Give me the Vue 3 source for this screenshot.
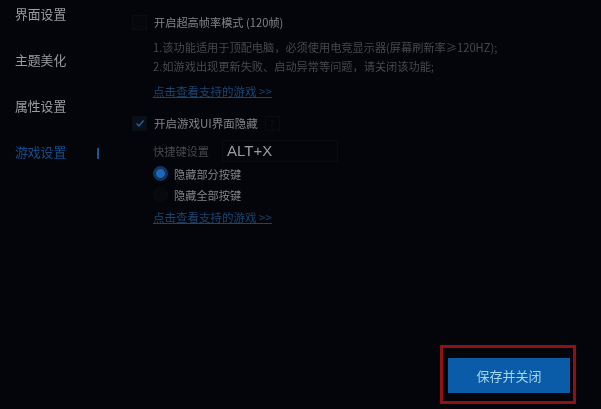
<script setup>
const navItems = [
  { label: '界面设置', active: false },
  { label: '主题美化', active: false },
  { label: '属性设置', active: false },
  { label: '游戏设置', active: true },
]
</script>

<template>
  <div class="page">
    <aside class="side">
      <div v-for="item in navItems" :key="item.label" class="nav" :class="{ on: item.active }">
        <span>{{ item.label }}</span>
        <i v-if="item.active" class="mark"></i>
      </div>
    </aside>
    <main class="main">
      <div class="check-row first">
        <span class="box"></span>
        <span>开启超高帧率模式 (120帧)</span>
      </div>
      <p class="note n1">1.该功能适用于顶配电脑，必须使用电竞显示器(屏幕刷新率≥120HZ);</p>
      <p class="note n2">2.如游戏出现更新失败、启动异常等问题，请关闭该功能;</p>
      <a class="link l1">点击查看支持的游戏 &gt;&gt;</a>
      <div class="check-row second">
        <span class="box on">
          <svg width="10" height="9" viewBox="0 0 10 9"><path d="M1.5 4.5 L4 7 L8.5 1.5" fill="none" stroke="#2a5f9a" stroke-width="1.4"/></svg>
        </span>
        <span>开启游戏UI界面隐藏</span>
        <span class="help">?</span>
      </div>
      <div class="indent">
        <div class="key-row">
          <span class="key-label">快捷键设置</span>
          <span class="key-input">ALT+X</span>
        </div>
        <div class="radio-row r1"><span class="radio sel"></span><span>隐藏部分按键</span></div>
        <div class="radio-row"><span class="radio"></span><span>隐藏全部按键</span></div>
        <a class="link l2">点击查看支持的游戏 &gt;&gt;</a>
      </div>
      <div class="foot">
        <div class="red">
          <button class="save">保存并关闭</button>
        </div>
      </div>
    </main>
  </div>
</template>

<style>
html, body { margin: 0; background: #04050a; }
</style>

<style scoped>
.page {
  width: 601px;
  height: 409px;
  display: flex;
  overflow: hidden;
  background: #04050a;
  color: #818387;
  font-family: "Noto Sans CJK SC", "Liberation Sans", sans-serif;
  font-size: 11.2px;
  filter: blur(0.5px);
}
.side {
  width: 100px;
  flex: none;
  padding-top: 4px;
  box-sizing: border-box;
}
.nav {
  height: 46px;
  box-sizing: border-box;
  display: flex;
  align-items: flex-start;
  justify-content: space-between;
  padding: 0 1px 0 15px;
  font-size: 12.8px;
  line-height: 20px;
  color: #9a9c9f;
}
.nav.on { color: #174f88; }
.mark {
  width: 2px;
  height: 11px;
  margin-top: 6px;
  background: #1c5690;
}
.main {
  flex: 1;
  display: flex;
  flex-direction: column;
  padding-left: 32px;
  min-width: 0;
}
.check-row {
  display: flex;
  align-items: center;
  gap: 7px;
  height: 18px;
}
.check-row.first { margin-top: 13px; }
.check-row.second { margin-top: 16px; font-size: 11.5px; gap: 7px; }
.box {
  width: 13px;
  height: 13px;
  border: 1px solid #0a0c11;
  background: #05070b;
  display: flex;
  align-items: center;
  justify-content: center;
  flex: none;
}
.box.on { background: #081019; border-color: #090e15; }
.note {
  margin: 0 0 0 21px;
  font-size: 11.2px;
  line-height: 19px;
  color: #46484d;
  white-space: nowrap;
}
.n1 { margin-top: 7px; }
.link {
  font-size: 11.5px;
  line-height: 14px;
  color: #184670;
  text-decoration: underline;
  align-self: flex-start;
}
.l1 { margin: 8px 0 0 21px; }
.help {
  width: 13px;
  height: 13px;
  border: 1px solid #0a0c11;
  text-align: center;
  font-size: 9px;
  line-height: 13px;
  color: #14161b;
}
.indent {
  padding-left: 21px;
  display: flex;
  flex-direction: column;
}
.key-row {
  display: flex;
  align-items: center;
  margin-top: 8px;
  height: 22px;
}
.key-label { width: 69px; color: #46484d; }
.key-input {
  width: 116px;
  height: 22px;
  box-sizing: border-box;
  border: 1px solid #0a0c11;
  padding-left: 4px;
  font-family: "Liberation Sans", sans-serif;
  font-size: 15px;
  line-height: 20px;
  color: #9a9c9f;
}
.radio-row {
  display: flex;
  align-items: center;
  gap: 6px;
  height: 21px;
}
.r1 { margin-top: 1px; }
.radio {
  width: 13px;
  height: 13px;
  border-radius: 50%;
  border: 1px solid #0a0c11;
  background: #07090e;
  flex: none;
}
.radio.sel {
  border: 2px solid #103460;
  width: 11px;
  height: 11px;
  background: #1d68b8;
  box-shadow: inset 0 0 0 1px #0c2a4a;
}
.l2 { margin-top: 5px; }
.foot {
  margin-top: auto;
  align-self: flex-end;
  margin-right: 25px;
  margin-bottom: 5px;
}
.red {
  width: 136px;
  height: 59px;
  box-sizing: border-box;
  border: 3px solid #8f1016;
  padding: 10px 3px 0 5px;
}
.save {
  display: block;
  width: 122px;
  height: 35px;
  border: 0;
  padding: 0;
  background: #0a5ca8;
  color: #a7d4ee;
  font-family: inherit;
  font-size: 13px;
}
</style>
